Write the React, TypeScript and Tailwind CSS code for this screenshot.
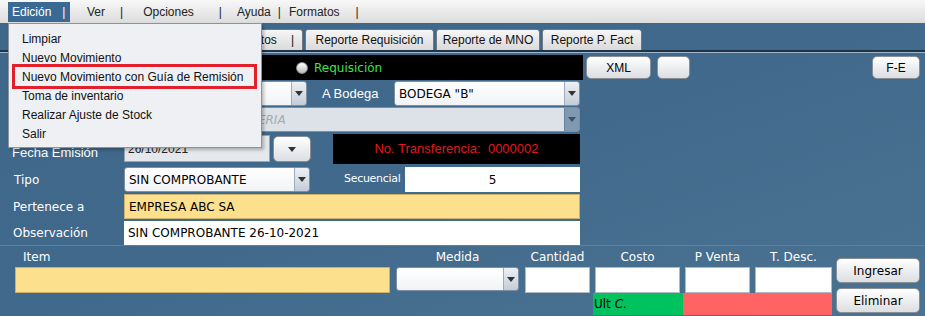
import React from 'react';

const COMIC = "font-['DejaVu_Sans',sans-serif]";
const TAHOMA = "font-['Liberation_Sans',Arial,sans-serif]";

const Arrow = () => (
  <svg width="8" height="5" viewBox="0 0 8 5">
    <polygon points="0,0 8,0 4,5" fill="#333" />
  </svg>
);

// combo box: text area plus a small arrow button on the right
const Combo = ({ className, text, disabled, italic }: { className: string; text?: string; disabled?: boolean; italic?: boolean }) => (
  <div className={`flex rounded-[3px] border border-[#7f8fa3] overflow-hidden ${className}`}>
    <div className={`flex-1 flex items-center pl-[4px] text-[12px] whitespace-nowrap overflow-hidden ${COMIC} ${disabled ? 'bg-[#dde2e8] text-[#a3a9b1]' : 'bg-gradient-to-b from-white to-[#f1f3f6] text-black'} ${italic ? 'italic' : ''}`}>
      {text}
    </div>
    <div className={`w-[15px] flex items-center justify-center border-l border-[#9eabbb] ${disabled ? 'bg-[#dde2e8] opacity-40' : 'bg-gradient-to-b from-[#edf1f5] to-[#c3ccd7]'}`}>
      <Arrow />
    </div>
  </div>
);

const Btn = ({ className, children }: { className: string; children?: React.ReactNode }) => (
  <div className={`flex items-center justify-center rounded-[5px] border border-[#8a8f96] bg-gradient-to-b from-white to-[#dcdee2] text-[12px] text-black ${className}`}>
    {children}
  </div>
);

const MENU_ITEMS = ['Limpiar', 'Nuevo Movimiento', 'Nuevo Movimiento con Guía de Remisión', 'Toma de inventario', 'Realizar Ajuste de Stock', 'Salir'];

export default function App() {
  return (
    <div className={`relative w-[925px] h-[316px] overflow-hidden bg-gradient-to-br from-[#3f6789] via-[#41698b] to-[#4a7393] ${TAHOMA}`}>
      {/* Menu bar */}
      <div className="h-[23px] flex items-center pl-[8px] bg-gradient-to-b from-[#f8f8f8] to-[#dcdcdc] text-[12px] text-[#222]">
        <div className="h-[20px] w-[62px] pl-[4px] flex items-center bg-[#3a6a93] text-white">
          Edición<span className="ml-[11px]">|</span>
        </div>
        <span className="ml-[17px]">Ver</span>
        <span className="ml-[15px]">|</span>
        <span className="ml-[20px]">Opciones</span>
        <span className="ml-[25px]">|</span>
        <span className="ml-[15px]">Ayuda</span>
        <span className="ml-[7px]">|</span>
        <span className="ml-[8px]">Formatos</span>
        <span className="ml-[16px]">|</span>
      </div>

      {/* Tabs */}
      <div className="h-[29px] flex items-end border-b-2 border-[#1f3347] text-[12px] text-[#111]">
        <div className="ml-[140px] w-[163px] h-[21px] flex items-center justify-end pr-[8px] gap-[14px] rounded-t-[3px] border border-b-0 border-[#6f7780] bg-gradient-to-b from-[#f6f6f6] to-[#dadada]">
          <span>Productos</span><span>|</span>
        </div>
        <div className="ml-[2px] w-[129px] h-[21px] flex items-center justify-center rounded-t-[3px] border border-b-0 border-[#6f7780] bg-gradient-to-b from-[#f6f6f6] to-[#dadada]">Reporte Requisición</div>
        <div className="ml-[2px] w-[104px] h-[21px] flex items-center justify-center rounded-t-[3px] border border-b-0 border-[#6f7780] bg-gradient-to-b from-[#f6f6f6] to-[#dadada]">Reporte de MNO</div>
        <div className="ml-[2px] w-[100px] h-[21px] flex items-center justify-center rounded-t-[3px] border border-b-0 border-[#6f7780] bg-gradient-to-b from-[#f6f6f6] to-[#dadada]">Reporte P. Fact</div>
      </div>

      <div className="border-t border-[#9fb8d0]">
        {/* Row 1 */}
        <div className="mt-[2px] h-[25px] flex items-center">
          <div className="ml-[8px] w-[575px] h-[25px] bg-black flex items-center pl-[288px]">
            <div className="w-[12px] h-[12px] rounded-full bg-gradient-to-b from-white to-[#b9bcc0] border border-[#888]" />
            <span className={`ml-[6px] text-[12px] text-[#3fe24c] ${COMIC}`}>Requisición</span>
          </div>
          <Btn className="ml-[3px] w-[65px] h-[23px]">XML</Btn>
          <Btn className="ml-[6px] w-[33px] h-[23px]" />
          <Btn className="ml-auto mr-[5px] w-[48px] h-[23px]">F-E</Btn>
        </div>

        {/* Row 2 (left part sits under the open menu) */}
        <div className="mt-[1px] h-[25px] flex items-center">
          <div className="w-[124px]" />
          <Combo className="w-[183px] h-[25px]" />
          <div className="ml-[15px] w-[72px] text-[13px] text-white">A Bodega</div>
          <Combo className="w-[186px] h-[25px]" text={'BODEGA "B"'} />
        </div>

        {/* Row 3 */}
        <div className="mt-[1px] h-[25px] flex items-center">
          <div className="w-[124px]" />
          <Combo className="w-[456px] h-[25px]" text="ALMACEN DE FERRETERIA" disabled italic />
        </div>

        {/* Row 4 */}
        <div className="mt-[2px] h-[30px] flex items-start">
          <div className="w-[124px] h-[30px] pl-[12px] pb-[2px] flex items-end text-[13px] text-white">Fecha Emisión</div>
          <div className="mt-[1px] w-[146px] h-[27px] bg-[#e4e7eb] border border-[#9aa4b0] pl-[3px] flex items-center text-[12px] text-[#222]">26/10/2021</div>
          <Btn className="mt-[2px] ml-[3px] w-[38px] h-[26px]"><Arrow /></Btn>
          <div className="ml-[22px] w-[247px] h-[30px] bg-black flex items-center justify-center text-[13px] text-[#e0191f]">
            No. Transferencia:&nbsp; 0000002
          </div>
        </div>

        {/* Row 5 */}
        <div className="mt-[3px] h-[25px] flex items-center">
          <div className={`w-[124px] pl-[14px] text-[12px] text-white ${COMIC}`}>Tipo</div>
          <Combo className="w-[186px] h-[25px]" text="SIN COMPROBANTE" />
          <div className={`w-[95px] pl-[34px] text-[11px] tracking-[-0.3px] text-white whitespace-nowrap ${COMIC}`}>Secuencial</div>
          <div className={`w-[175px] h-[25px] bg-white flex items-center justify-center text-[12px] ${COMIC}`}>5</div>
        </div>

        {/* Row 6 */}
        <div className="mt-[2px] h-[25px] flex items-center">
          <div className={`w-[124px] pl-[13px] text-[12px] text-white ${COMIC}`}>Pertenece a</div>
          <div className={`w-[456px] h-[25px] bg-[#fde08d] border border-[#cbb06a] pl-[4px] flex items-center text-[12px] ${COMIC}`}>EMPRESA ABC SA</div>
        </div>

        {/* Row 7 */}
        <div className="mt-[2px] h-[24px] flex items-center">
          <div className={`w-[124px] pl-[13px] text-[12px] text-white ${COMIC}`}>Observación</div>
          <div className={`w-[456px] h-[24px] bg-white pl-[4px] flex items-center text-[12px] ${COMIC}`}>SIN COMPROBANTE 26-10-2021</div>
        </div>

        {/* Detail entry */}
        <div className={`border-t border-[#5a82a5] flex ${COMIC} text-[12px]`}>
          <div className="flex flex-col">
            <div className="flex">
              <div className="ml-[15px] w-[375px] flex flex-col">
                <div className="h-[21px] pl-[8px] flex items-center text-white">Item</div>
                <div className="h-[26px] bg-[#fde08d] border border-[#cbb06a]" />
              </div>
              <div className="ml-[6px] w-[123px] flex flex-col">
                <div className="h-[21px] flex items-center justify-center text-white">Medida</div>
                <Combo className="h-[24px]" />
              </div>
              <div className="ml-[6px] w-[65px] flex flex-col">
                <div className="h-[21px] flex items-center justify-center text-white">Cantidad</div>
                <div className="h-[26px] bg-white border border-[#b0b8c2]" />
              </div>
              <div className="ml-[5px] w-[85px] flex flex-col">
                <div className="h-[21px] flex items-center justify-center text-white">Costo</div>
                <div className="h-[26px] bg-white border border-[#b0b8c2]" />
              </div>
              <div className="ml-[5px] w-[65px] flex flex-col">
                <div className="h-[21px] flex items-center justify-center text-white">P Venta</div>
                <div className="h-[26px] bg-white border border-[#b0b8c2]" />
              </div>
              <div className="ml-[5px] w-[77px] flex flex-col">
                <div className="h-[21px] flex items-center justify-center text-white">T. Desc.</div>
                <div className="h-[26px] bg-white border border-[#b0b8c2]" />
              </div>
            </div>
            <div className="flex ml-[593px] h-[22px]">
              <div className="w-[90px] bg-[#00c35f] pl-[1px] flex items-center text-black">Ult <i className="ml-[4px]">C.</i></div>
              <div className="w-[149px] bg-[#ff6363]" />
            </div>
          </div>
          <div className="ml-[4px] mt-[12px] w-[84px] flex flex-col gap-[5px]">
            <Btn className={`h-[25px] ${COMIC}`}>Ingresar</Btn>
            <Btn className={`h-[25px] ${COMIC}`}>Eliminar</Btn>
          </div>
        </div>
      </div>

      {/* Open dropdown of the Edición menu */}
      <div className="absolute left-[8px] top-[23px] w-[254px] h-[125px] bg-[#eef0f4] border border-[#8d939b] shadow-[2px_2px_3px_rgba(0,0,0,0.25)] pt-[5px] text-[12px] text-[#111]">
        {MENU_ITEMS.map((item, i) => (
          <div key={item} className={`h-[19px] pl-[13px] flex items-center ${i === 2 ? 'relative' : ''}`}>
            {item}
            {i === 2 && <div className="absolute left-[3px] right-[4px] -top-[3px] -bottom-[3px] border-[3px] border-[#e1202b]" />}
          </div>
        ))}
      </div>
    </div>
  );
}
